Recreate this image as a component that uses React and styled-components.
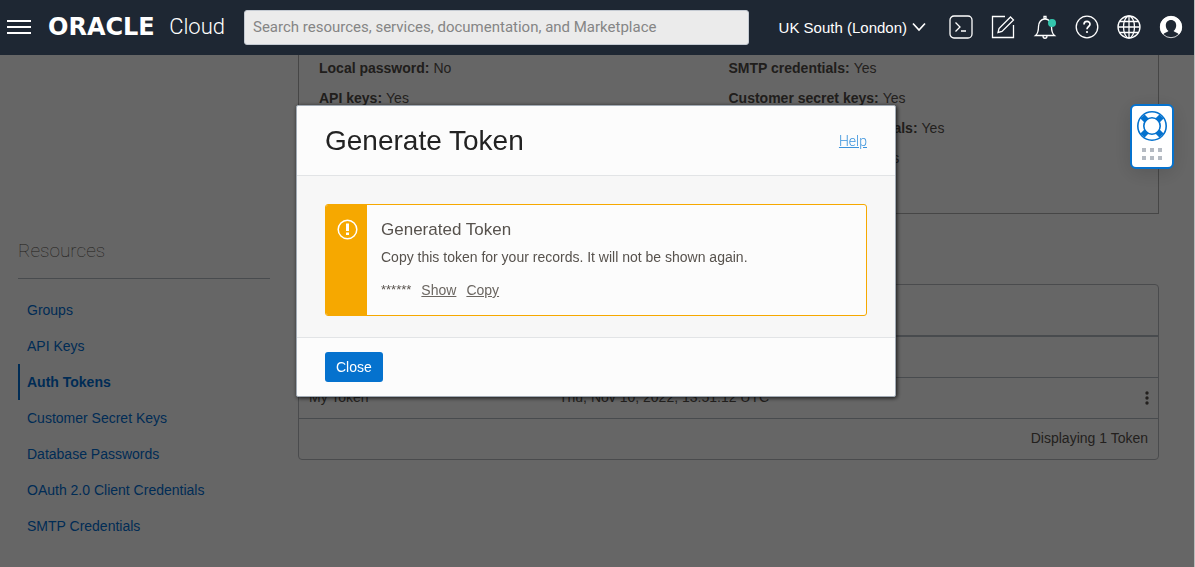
import React from "react";
import styled, { createGlobalStyle } from "styled-components";

const GlobalStyle = createGlobalStyle`
  * {
    box-sizing: border-box;
  }
  body {
    margin: 0;
    background: #ffffff;
    color: #57524d;
    font: 14px/20px "Liberation Sans", Arial, sans-serif;
    overflow: hidden;
  }
`;

const Page = styled.div`
  min-height: 100vh;
  border-right: 1px solid #bbbbbb;
`;

const TopBar = styled.header`
  position: relative;
  z-index: 2;
  height: 55px;
  padding: 0 11px 1px 7px;
  display: flex;
  align-items: center;
  background: #1e2733;
  color: white;
`;

const IconButton = styled.button`
  width: 24px;
  height: 24px;
  padding: 0;
  border: none;
  background: none;
  color: white;
  cursor: pointer;
  svg {
    display: block;
  }
`;

const Brand = styled.a`
  width: 177px;
  margin: 0 19px 0 17px;
  display: flex;
  align-items: center;
  justify-content: space-between;
  color: white;
  text-decoration: none;
  line-height: 28px;
`;

const Wordmark = styled.span`
  font-family: "DejaVu Sans", sans-serif;
  font-size: 24px;
  font-weight: 700;
`;

const Product = styled.span`
  font-family: Roboto, sans-serif;
  font-size: 22px;
  font-weight: 300;
`;

const SearchInput = styled.input`
  flex: 1;
  max-width: 505px;
  height: 35px;
  padding: 0 8px;
  border: 1px solid #c4cad2;
  border-radius: 3px;
  background: #ebebeb;
  font: 15px Roboto, sans-serif;
  &::placeholder {
    color: #858585;
    opacity: 1;
  }
`;

const RegionButton = styled.button`
  margin-left: auto;
  padding: 0;
  display: flex;
  align-items: center;
  gap: 5px;
  border: none;
  background: none;
  color: white;
  font: 15px "Liberation Sans", Arial, sans-serif;
  cursor: pointer;
`;

const Tools = styled.div`
  margin-left: 23px;
  display: flex;
  gap: 18px;
`;

const Content = styled.main`
  display: flex;
  gap: 28px;
  padding: 0 35px 0 18px;
`;

const Sidebar = styled.nav`
  width: 252px;
  padding-top: 181px;
`;

const SidebarTitle = styled.h2`
  margin: 0 0 13px;
  padding-bottom: 12px;
  border-bottom: 1px solid #b4bcc4;
  color: #57524d;
  font: 100 19px/30px Roboto, sans-serif;
`;

const ResourceList = styled.ul`
  margin: 0;
  padding: 0;
  list-style: none;
`;

const ResourceLink = styled.a`
  display: block;
  padding-left: 7px;
  border-left: 2px solid ${({ $active }) => ($active ? "#006ed5" : "transparent")};
  color: #006ed5;
  font-weight: ${({ $active }) => ($active ? 700 : 400)};
  line-height: 36px;
  text-decoration: none;
`;

const Main = styled.div`
  flex: 1;
`;

const InfoPanel = styled.section`
  height: 159px;
  padding: 0 20px;
  display: grid;
  grid-template-columns: 1fr 1fr;
  border: 1px solid #b0b0b0;
  border-top: none;
`;

const InfoColumn = styled.dl`
  margin: 0;
  display: flex;
  flex-direction: column;
  gap: 4px;
  div {
    display: flex;
    gap: 4px;
    line-height: 26px;
  }
  dt {
    color: #504b47;
    font-weight: 700;
  }
  dd {
    margin: 0;
  }
`;

const TableCard = styled.section`
  margin-top: 70px;
  padding-top: 50px;
  border: 1px solid #b8bcc0;
  border-radius: 4px;
`;

const TokenTable = styled.table`
  width: 100%;
  table-layout: fixed;
  border-collapse: separate;
  border-spacing: 0;
  border-top: 2px solid #b4bcc4;
  th,
  td {
    height: 41px;
    padding: 0 10px 2px;
    border-bottom: 1px solid #b4bcc4;
    text-align: left;
  }
  th:first-child {
    width: 250px;
  }
  th:last-child {
    width: 40px;
  }
  td:last-child {
    padding: 0 8px;
  }
`;

const MenuButton = styled.button`
  width: 6px;
  height: 16px;
  padding: 0;
  display: block;
  margin-left: auto;
  border: none;
  background: none;
  color: #57524d;
`;

const TableFooter = styled.p`
  margin: 0;
  padding: 0 10px 2px;
  line-height: 38px;
  text-align: right;
`;

const Backdrop = styled.div`
  position: fixed;
  inset: 0 1px 0 0;
  padding: 105px 2px 0 0;
  display: flex;
  align-items: flex-start;
  justify-content: center;
  background: rgba(0, 0, 0, 0.6);
`;

const Dialog = styled.div`
  width: 600px;
  border: 1px solid #a2abb5;
  border-radius: 2px;
  background: #fcfcfc;
  box-shadow: 1px 1px 4px rgba(0, 0, 0, 0.8);
`;

const DialogHeader = styled.div`
  padding: 15px 28px 14px;
  display: flex;
  align-items: center;
  justify-content: space-between;
  h1 {
    margin: 0;
    color: #222222;
    font-size: 28px;
    font-weight: 400;
    line-height: 40px;
  }
  a {
    color: #3b93dc;
    font: 300 14px/20px Roboto, sans-serif;
  }
`;

const DialogBody = styled.div`
  padding: 28px 28px 21px;
  border: solid #e2e4e6;
  border-width: 1px 0;
  background: #f7f7f7;
`;

const Notice = styled.div`
  display: flex;
  overflow: hidden;
  border: 1px solid #f6a800;
  border-radius: 3px;
  background: #fcfcfc;
`;

const NoticeIcon = styled.div`
  width: 41px;
  padding: 14px 0 0 11px;
  background: #f6a800;
`;

const NoticeText = styled.div`
  padding: 14px 14px 15px;
  h2 {
    margin: 0 0 6px;
    font-size: 17px;
    font-weight: 400;
    line-height: 22px;
  }
  p {
    margin: 0 0 13px;
  }
`;

const TokenRow = styled.div`
  display: flex;
  gap: 10px;
  span {
    font-size: 13px;
  }
  a {
    color: #6b6661;
  }
`;

const DialogFooter = styled.div`
  padding: 14px 28px;
`;

const CloseButton = styled.button`
  display: block;
  height: 30px;
  padding: 0 11px;
  border: none;
  border-radius: 3px;
  background: #0572ce;
  color: white;
  font: 14px "Liberation Sans", Arial, sans-serif;
`;

const SupportButton = styled.button`
  position: fixed;
  z-index: 3;
  top: 104px;
  right: 21px;
  width: 44px;
  height: 65px;
  padding: 5px 0 0 5px;
  display: flex;
  align-items: flex-start;
  border: 2px solid #0572ce;
  border-radius: 6px;
  background: white;
  box-shadow: 0 4px 20px rgba(0, 0, 0, 0.15);
`;

const resources = [
  "Groups",
  "API Keys",
  "Auth Tokens",
  "Customer Secret Keys",
  "Database Passwords",
  "OAuth 2.0 Client Credentials",
  "SMTP Credentials",
];

const capabilities = [
  [
    ["Local password", "No"],
    ["API keys", "Yes"],
  ],
  [
    ["SMTP credentials", "Yes"],
    ["Customer secret keys", "Yes"],
    ["OAuth 2.0 client credentials", "Yes"],
    ["Database passwords", "Yes"],
  ],
];

function Icon({ children, width = 24, height = 24 }) {
  return (
    <svg
      width={width}
      height={height}
      viewBox={`0 0 ${width} ${height}`}
      fill="none"
      stroke="currentColor"
      strokeWidth="1.3"
      aria-hidden="true"
    >
      {children}
    </svg>
  );
}

function Header() {
  return (
    <TopBar>
      <IconButton aria-label="Menu">
        <Icon>
          <path d="M0 6h24M0 12h24M0 18h24" strokeWidth="2" />
        </Icon>
      </IconButton>
      <Brand href="#">
        <Wordmark>ORACLE</Wordmark>
        <Product>Cloud</Product>
      </Brand>
      <SearchInput
        type="search"
        aria-label="Search"
        placeholder="Search resources, services, documentation, and Marketplace"
      />
      <RegionButton>
        UK South (London)
        <Icon width={14} height={10}>
          <path d="M1 1.5l6 6.5 6-6.5" strokeWidth="1.7" />
        </Icon>
      </RegionButton>
      <Tools>
        <IconButton aria-label="Cloud shell">
          <Icon>
            <rect x="1" y="1" width="22" height="22" rx="4" />
            <path d="M6.5 7.5l4.5 4.5-4.5 4.5M12 16h5" />
          </Icon>
        </IconButton>
        <IconButton aria-label="Edit">
          <Icon>
            <path d="M14 1.5H1.5v21h21V10" />
            <path d="M19.500 2l3 3L11 16.500l-4 1 1-4z" />
          </Icon>
        </IconButton>
        <IconButton aria-label="Announcements">
          <Icon>
            <path d="M2.500 20.500h19c-2.500-2-3-4.500-3-9 0-4-2.500-7.500-6.500-7.500S5.500 7.500 5.500 11.500c0 4.500-.5 7-3 9zM10 21c0 3 4 3 4 0M11 4V1.500h2V4" />
            <circle cx="19" cy="8" r="4" fill="#34c6ad" stroke="none" />
          </Icon>
        </IconButton>
        <IconButton aria-label="Help">
          <Icon>
            <circle cx="12" cy="12" r="10.800" />
            <path
              d="M9 9.500c0-4 6-4 6-.3 0 2.300-3 2.300-3 5"
              strokeWidth="1.700"
            />
            <circle cx="12" cy="17" r="1.100" fill="currentColor" stroke="none" />
          </Icon>
        </IconButton>
        <IconButton aria-label="Language">
          <Icon>
            <circle cx="12" cy="12" r="11" />
            <ellipse cx="12" cy="12" rx="5.500" ry="11" />
            <path d="M12 1v22M1 12h22M3 6.500h18M3 17.500h18" />
          </Icon>
        </IconButton>
        <IconButton aria-label="Profile">
          <Icon>
            <circle cx="12" cy="12" r="10.700" fill="#1e2733" strokeWidth="0.8" />
            <path
              d="M12 1C5.500 1 1 6 1 12c0 3 1.200 5.500 3 7.500 1.500-1.800 4.500-2.300 5.500-3.500-1.800-1.300-2.700-3.300-2.700-5.500 0-3.200 2-5.500 5.200-5.500s5.200 2.300 5.200 5.500c0 2.200-.9 4.200-2.700 5.500 1 1.200 4 1.700 5.500 3.500 1.800-2 3-4.500 3-7.500 0-6-4.500-11-11-11z"
              fill="white"
              stroke="none"
            />
          </Icon>
        </IconButton>
      </Tools>
    </TopBar>
  );
}

function GenerateTokenDialog() {
  return (
    <Backdrop>
      <Dialog role="dialog" aria-labelledby="dialog-title">
        <DialogHeader>
          <h1 id="dialog-title">Generate Token</h1>
          <a href="#help">Help</a>
        </DialogHeader>
        <DialogBody>
          <Notice>
            <NoticeIcon>
              <svg width="21" height="21" viewBox="0 0 21 21" aria-hidden="true">
                <circle cx="10.500" cy="10.500" r="9.300" fill="none" stroke="white" strokeWidth="1.500" />
                <path d="M9 4.500h3v7.500H9zM9 13.500h3V16H9z" fill="white" />
              </svg>
            </NoticeIcon>
            <NoticeText>
              <h2>Generated Token</h2>
              <p>Copy this token for your records. It will not be shown again.</p>
              <TokenRow>
                <span>******</span>
                <a href="#show">Show</a>
                <a href="#copy">Copy</a>
              </TokenRow>
            </NoticeText>
          </Notice>
        </DialogBody>
        <DialogFooter>
          <CloseButton>Close</CloseButton>
        </DialogFooter>
      </Dialog>
    </Backdrop>
  );
}

function App() {
  return (
    <Page>
      <GlobalStyle />
      <Header />
      <Content>
        <Sidebar>
          <SidebarTitle>Resources</SidebarTitle>
          <ResourceList>
            {resources.map((name) => (
              <li key={name}>
                <ResourceLink href="#" $active={name === "Auth Tokens"}>
                  {name}
                </ResourceLink>
              </li>
            ))}
          </ResourceList>
        </Sidebar>
        <Main>
          <InfoPanel>
            {capabilities.map((column, index) => (
              <InfoColumn key={index}>
                {column.map(([label, value]) => (
                  <div key={label}>
                    <dt>{label}:</dt>
                    <dd>{value}</dd>
                  </div>
                ))}
              </InfoColumn>
            ))}
          </InfoPanel>
          <TableCard>
            <TokenTable>
              <thead>
                <tr>
                  <th></th>
                  <th></th>
                  <th></th>
                </tr>
              </thead>
              <tbody>
                <tr>
                  <td>My Token</td>
                  <td>Thu, Nov 10, 2022, 13:51:12 UTC</td>
                  <td>
                    <MenuButton aria-label="Actions">
                      <svg width="6" height="16" viewBox="0 0 6 16" fill="currentColor">
                        <circle cx="3" cy="3" r="1.700" />
                        <circle cx="3" cy="8" r="1.700" />
                        <circle cx="3" cy="13" r="1.700" />
                      </svg>
                    </MenuButton>
                  </td>
                </tr>
              </tbody>
            </TokenTable>
            <TableFooter>Displaying 1 Token</TableFooter>
          </TableCard>
        </Main>
      </Content>
      <GenerateTokenDialog />
      <SupportButton aria-label="Support">
        <svg width="30" height="51" viewBox="0 0 30 51" fill="#0572ce">
          <circle cx="15" cy="15" r="14.200" fill="none" stroke="#0572ce" strokeWidth="1.600" />
          <circle cx="15" cy="15" r="8.200" fill="none" stroke="#0572ce" strokeWidth="1.600" />
          <path
            d="M5.500 5.500l4 4M24.500 5.500l-4 4M5.500 24.500l4-4M24.500 24.500l-4-4"
            stroke="#0572ce"
            strokeWidth="6"
          />
          <path
            d="M5 37h4v4H5zM13 37h4v4h-4zM21 37h4v4h-4zM5 45h4v4H5zM13 45h4v4h-4zM21 45h4v4h-4z"
            fill="#b4bac2"
          />
        </svg>
      </SupportButton>
    </Page>
  );
}

export default App;
